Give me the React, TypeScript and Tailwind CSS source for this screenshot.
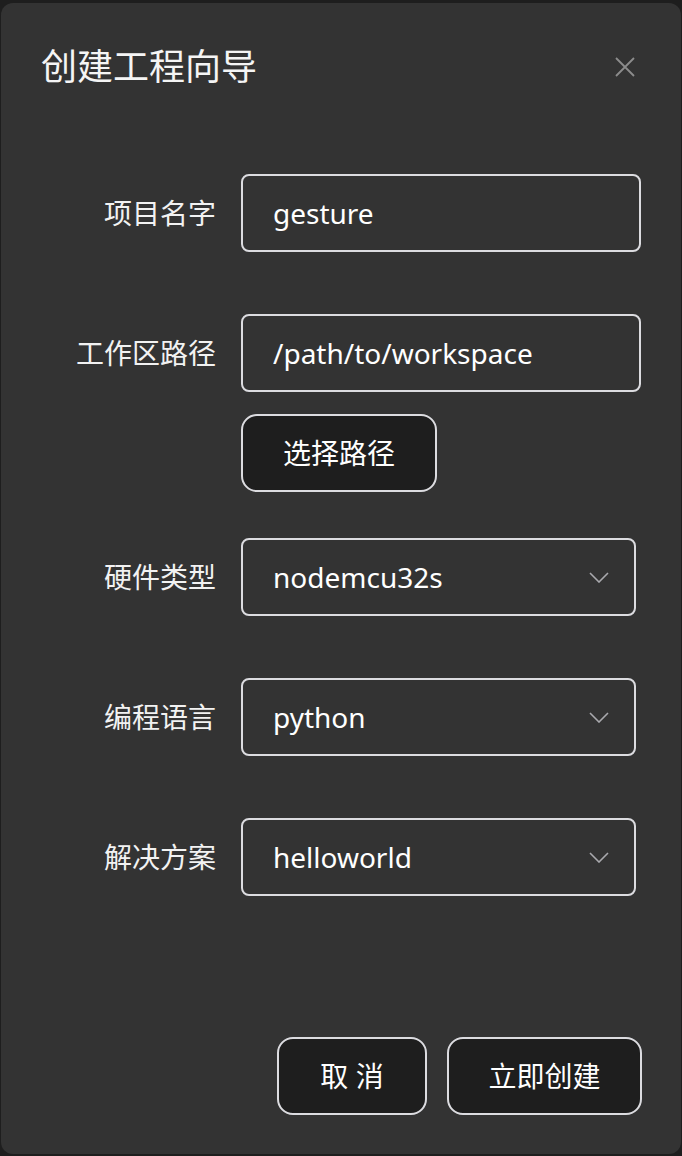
import React, { useState } from "react";

const font = { fontFamily: '"Noto Sans", "Noto Sans CJK SC", sans-serif' };

const Chevron = () => (
  <svg width="20" height="11" viewBox="0 0 20 11" fill="none">
    <polyline points="1,1 10,10 19,1" stroke="#a9a9ad" strokeWidth="1.6" />
  </svg>
);

function Row({ label, children }: { label: string; children: React.ReactNode }) {
  return (
    <div className="flex items-center">
      <div className="w-[215px] text-right text-[28px] text-[#f2f2f2]">{label}</div>
      <div className="ml-[25px]">{children}</div>
    </div>
  );
}

function Select({ value }: { value: string }) {
  return (
    <div className="flex h-[78px] w-[395px] items-center justify-between rounded-lg border-2 border-[#dcdce0] pl-[30px] pr-[25px]">
      <span className="text-[28px] text-white">{value}</span>
      <Chevron />
    </div>
  );
}

export default function App() {
  const [name, setName] = useState("gesture");
  const [path, setPath] = useState("/path/to/workspace");

  return (
    <div className="h-[1156px] w-[682px] bg-[#1e1e1e] pt-[3px] pl-[1px]" style={font}>
      <div className="flex h-[1151px] w-[680px] flex-col rounded-xl bg-[#333333]">
        {/* Header */}
        <div className="flex h-[128px] items-center justify-between pl-[40px] pr-[46px]">
          <h1 className="text-[36px] text-[#f5f5f5]">创建工程向导</h1>
          <button className="text-[#8c8c8c]">
            <svg width="20" height="20" viewBox="0 0 20 20">
              <path d="M1 1 L19 19 M19 1 L1 19" stroke="currentColor" strokeWidth="1.8" />
            </svg>
          </button>
        </div>

        {/* Form */}
        <div className="mt-[43px] flex flex-col">
          <Row label="项目名字">
            <input
              value={name}
              onChange={(e) => setName(e.target.value)}
              className="h-[78px] w-[400px] rounded-lg border-2 border-[#dcdce0] bg-transparent pl-[30px] text-[28px] text-white outline-none"
            />
          </Row>

          <div className="mt-[62px]">
            <Row label="工作区路径">
              <input
                value={path}
                onChange={(e) => setPath(e.target.value)}
                className="h-[78px] w-[400px] rounded-lg border-2 border-[#dcdce0] bg-transparent pl-[30px] text-[28px] text-white outline-none"
              />
            </Row>
          </div>

          <div className="ml-[240px] mt-[22px]">
            <button className="h-[78px] w-[196px] rounded-2xl border-2 border-[#dcdce0] bg-[#1e1e1e] text-[28px] text-white">
              选择路径
            </button>
          </div>

          <div className="mt-[46px]">
            <Row label="硬件类型">
              <Select value="nodemcu32s" />
            </Row>
          </div>
          <div className="mt-[62px]">
            <Row label="编程语言">
              <Select value="python" />
            </Row>
          </div>
          <div className="mt-[62px]">
            <Row label="解决方案">
              <Select value="helloworld" />
            </Row>
          </div>
        </div>

        {/* Footer */}
        <div className="mt-auto mb-[39px] flex justify-end gap-[20px] pr-[39px]">
          <button className="h-[78px] w-[150px] rounded-2xl border-2 border-[#dcdce0] bg-[#1e1e1e] text-[28px] text-white">
            取 消
          </button>
          <button className="h-[78px] w-[195px] rounded-2xl border-2 border-[#dcdce0] bg-[#1e1e1e] text-[28px] text-white">
            立即创建
          </button>
        </div>
      </div>
    </div>
  );
}
